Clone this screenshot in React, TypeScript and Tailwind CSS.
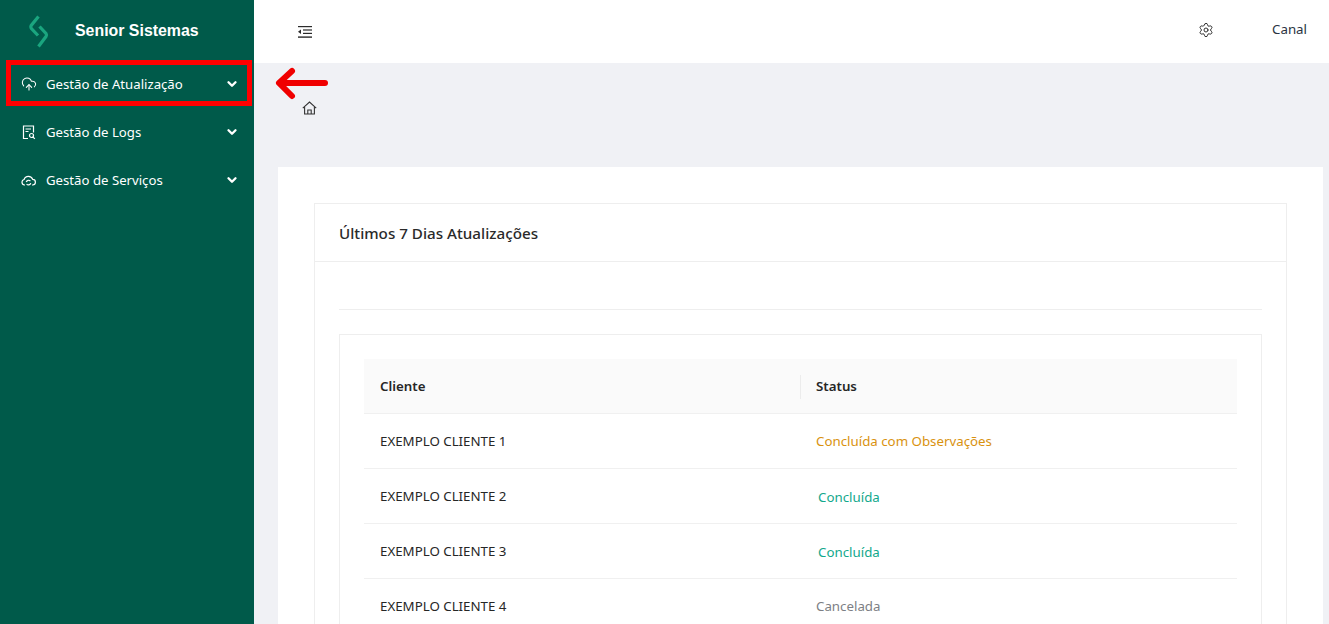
import { ChevronDown, CloudUpload, Settings } from "lucide-react";

const menuItems = [
  { label: "Gestão de Atualização", icon: <CloudUpload className="h-[16px] w-[16px]" strokeWidth={1.6} /> },
  { label: "Gestão de Logs", icon: <LogsIcon /> },
  { label: "Gestão de Serviços", icon: <ServiceIcon /> },
];

const rows = [
  { name: "EXEMPLO CLIENTE 1", status: "Concluída com Observações", color: "text-[#d9920f] pl-[16px] pt-[2px]" },
  { name: "EXEMPLO CLIENTE 2", status: "Concluída", color: "text-[#12a88c] pl-[18px] pt-[4px]" },
  { name: "EXEMPLO CLIENTE 3", status: "Concluída", color: "text-[#12a88c] pl-[18px] pt-[4px]" },
  { name: "EXEMPLO CLIENTE 4", status: "Cancelada", color: "text-[#7d7f85] pl-[16px] pt-[2px]" },
];

function LogsIcon() {
  return (
    <svg className="ml-[1px]" width="14" height="15" viewBox="0 0 14 15" fill="none" stroke="currentColor" strokeWidth="1.2">
      <path d="M6 13.5H1.5V1h10v6.5" />
      <path d="M3.5 4h5.5M3.5 6.5h3" />
      <circle cx="9.5" cy="10.5" r="2" />
      <path d="M11 12l1.8 1.8" />
    </svg>
  );
}

function ServiceIcon() {
  return (
    <svg width="15" height="13" viewBox="0 0 15 13" fill="none" stroke="currentColor" strokeWidth="1.2">
      <path d="M4 11H3.5a2.8 2.8 0 0 1-.4-5.5A4.5 4.5 0 0 1 11.7 5.4 2.8 2.8 0 0 1 11.5 11H11" />
      <path d="M5.2 8a2.4 2.4 0 0 1 4.2-.8M9.8 9.2a2.4 2.4 0 0 1-4.2.8" />
    </svg>
  );
}

function Logo() {
  return (
    <svg width="20" height="33" viewBox="0 0 20 33" fill="none" stroke="#1aa57f" strokeWidth="3.2">
      <path d="M9.5 1.5 2.2 10.5 Q1.4 12 2.4 13.5L9 20.5" />
      <path d="M10.5 11.5 17 18.5Q18 20 17 21.5L9.5 31.5" />
    </svg>
  );
}

function CollapseIcon() {
  return (
    <svg className="mt-[5px]" width="14" height="14" viewBox="0 0 14 14" fill="#2b2b2b">
      <rect x="0" y="1" width="14" height="1.2" />
      <rect x="5" y="4.4" width="9" height="1.2" />
      <rect x="5" y="7.8" width="9" height="1.2" />
      <rect x="0" y="11.4" width="14" height="1.4" />
      <path d="M0 6.7 3 4.5v4.4z" />
    </svg>
  );
}

function HomeIcon() {
  return (
    <svg width="15" height="14" viewBox="0 0 15 14" fill="none" stroke="#333" strokeWidth="1.1">
      <path d="M.8 7.2 7.5 1l6.7 6.2" />
      <path d="M2.6 6v7h9.8V6" />
      <path d="M5.8 13V9h3.4v4" />
    </svg>
  );
}

export default function App() {
  return (
    <div className="relative flex h-[624px] overflow-hidden bg-[#f0f1f5] font-['Noto_Sans',sans-serif] text-[13.3px] text-[#262626]">
      <aside className="w-[254px] shrink-0 bg-[#005a4a] text-white">
        <div className="flex h-[60px] items-center">
          <div className="ml-[29px] mt-[2px] flex w-[46px] items-center"><Logo /></div>
          <span className="mt-[1px] font-['Liberation_Sans',sans-serif] text-[15.9px] font-bold">Senior Sistemas</span>
        </div>
        {menuItems.map((item) => (
          <div key={item.label} className="flex h-[48px] items-center pl-[21px] pr-[15px]">
            <span className="flex w-[25px] items-center">{item.icon}</span>
            <span className="flex-1 pt-[2px] text-[13.2px]">{item.label}</span>
            <ChevronDown className="h-[14px] w-[14px]" strokeWidth={4} />
          </div>
        ))}
      </aside>

      <div className="flex min-w-0 flex-1 flex-col">
        <header className="flex h-[63px] shrink-0 items-center justify-between bg-white pb-[4px] pl-[44px] pr-[22px]">
          <CollapseIcon />
          <div className="flex items-center gap-[58px]">
            <Settings className="h-[16px] w-[16px] text-[#333]" strokeWidth={1.5} />
            <span className="text-[#2a3342]">Canal</span>
          </div>
        </header>

        <div className="flex h-[104px] shrink-0 items-start pl-[48px] pt-[38px]">
          <HomeIcon />
        </div>

        <main className="ml-[24px] mr-[6px] flex-1 bg-white pl-[36px] pr-[36px] pt-[36px]">
          <section className="border border-[#eeeeee]">
            <div className="flex h-[58px] items-center border-b border-[#eeeeee] pl-[24px] pt-[1px] text-[15.2px] font-medium text-[#2a2a2a]">
              Últimos 7 Dias Atualizações
            </div>
            <div className="px-[24px] pt-[47px]">
              <div className="border-t border-[#eeeeee]" />
              <div className="mt-[24px] border border-[#eeeeee] p-[24px]">
                <div className="grid h-[55px] grid-cols-[436px_1fr] items-center border-b border-[#f0f0f0] bg-[#fafafa] pt-[2px] font-semibold text-[#262626]">
                  <span className="pl-[16px]">Cliente</span>
                  <span className="flex h-[24px] items-center border-l border-[#ececec] pl-[15px]">Status</span>
                </div>
                {rows.map((row) => (
                  <div key={row.name} className="grid h-[55px] grid-cols-[436px_1fr] items-center border-b border-[#f0f0f0]">
                    <span className="pl-[16px] pt-[2px]">{row.name}</span>
                    <span className={row.color}>{row.status}</span>
                  </div>
                ))}
              </div>
            </div>
          </section>
        </main>
      </div>

      {/* marcacao vermelha por cima do menu */}
      <div className="absolute left-[6px] top-[60px] h-[46px] w-[246px] border-[5px] border-[#ff0000]" />
      <svg className="absolute left-[274px] top-[66px]" width="56" height="35" viewBox="0 0 56 35" fill="none" stroke="#f00000" strokeWidth="6" strokeLinecap="round" strokeLinejoin="round">
        <path d="M51 17H6" />
        <path d="M18 5 5 17l13 13" />
      </svg>
    </div>
  );
}
